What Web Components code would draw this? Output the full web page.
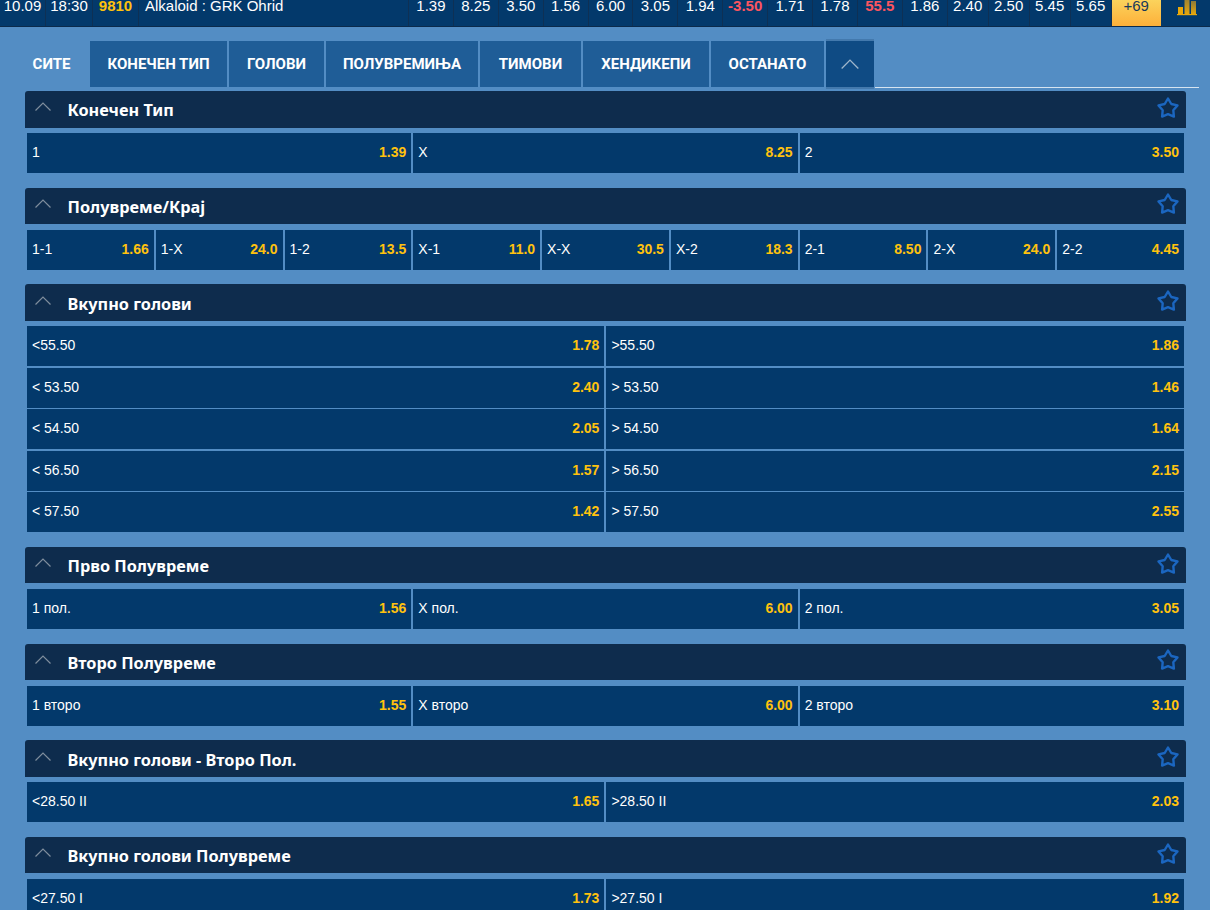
<!DOCTYPE html>
<html>
<head>
<meta charset="utf-8">
<style>
    html,body{margin:0;height:910px;overflow:hidden;background:#538dc4;}
    body{font-family:"Liberation Sans",Arial,sans-serif;color:#fff;}
    #markets{display:block;padding:0 24px 0 25px;}
</style>
</head>
<body>
<top-bar date="10.09" time="18:30" code="9810" match="Alkaloid : GRK Ohrid" more="+69"
    odds="1.39 8.25 3.50 1.56 6.00 3.05 1.94 -3.50 1.71 1.78 55.5 1.86 2.40 2.50 5.45 5.65"></top-bar>
<odds-tabs></odds-tabs>
<div id="markets">
    <market-panel heading="Конечен Тип" cols="3">
        <odd-cell label="1" value="1.39"></odd-cell><odd-cell label="X" value="8.25"></odd-cell><odd-cell label="2" value="3.50"></odd-cell>
    </market-panel>
    <market-panel heading="Полувреме/Крај" cols="9">
        <odd-cell label="1-1" value="1.66"></odd-cell><odd-cell label="1-X" value="24.0"></odd-cell><odd-cell label="1-2" value="13.5"></odd-cell>
        <odd-cell label="X-1" value="11.0"></odd-cell><odd-cell label="X-X" value="30.5"></odd-cell><odd-cell label="X-2" value="18.3"></odd-cell>
        <odd-cell label="2-1" value="8.50"></odd-cell><odd-cell label="2-X" value="24.0"></odd-cell><odd-cell label="2-2" value="4.45"></odd-cell>
    </market-panel>
    <market-panel heading="Вкупно голови" cols="2">
        <odd-cell label="<55.50" value="1.78"></odd-cell><odd-cell label=">55.50" value="1.86"></odd-cell>
        <odd-cell label="< 53.50" value="2.40"></odd-cell><odd-cell label="> 53.50" value="1.46"></odd-cell>
        <odd-cell label="< 54.50" value="2.05"></odd-cell><odd-cell label="> 54.50" value="1.64"></odd-cell>
        <odd-cell label="< 56.50" value="1.57"></odd-cell><odd-cell label="> 56.50" value="2.15"></odd-cell>
        <odd-cell label="< 57.50" value="1.42"></odd-cell><odd-cell label="> 57.50" value="2.55"></odd-cell>
    </market-panel>
    <market-panel heading="Прво Полувреме" cols="3">
        <odd-cell label="1 пол." value="1.56"></odd-cell><odd-cell label="X пол." value="6.00"></odd-cell><odd-cell label="2 пол." value="3.05"></odd-cell>
    </market-panel>
    <market-panel heading="Второ Полувреме" cols="3">
        <odd-cell label="1 второ" value="1.55"></odd-cell><odd-cell label="X второ" value="6.00"></odd-cell><odd-cell label="2 второ" value="3.10"></odd-cell>
    </market-panel>
    <market-panel heading="Вкупно голови - Второ Пол." cols="2">
        <odd-cell label="<28.50 II" value="1.65"></odd-cell><odd-cell label=">28.50 II" value="2.03"></odd-cell>
    </market-panel>
    <market-panel heading="Вкупно голови Полувреме" cols="2">
        <odd-cell label="<27.50 I" value="1.73"></odd-cell><odd-cell label=">27.50 I" value="1.92"></odd-cell>
    </market-panel>
</div>
<script>
const CHEVRON = `<svg width="16" height="9" viewBox="0 0 16 9" fill="none" stroke="currentColor" stroke-width="1.2"><path d="M0.5 8.5L8 1L15.5 8.5"/></svg>`;

class TopBar extends HTMLElement{
    constructor(){
        super()
        this.attachShadow({mode:"open"});
        this.shadowRoot.append(TopBar.template.content.cloneNode(true))
    }
    connectedCallback(){
        const $ = (s)=>this.shadowRoot.querySelector(s);
        $("#date").textContent = this.getAttribute("date");
        $("#time").textContent = this.getAttribute("time");
        $("#code").textContent = this.getAttribute("code");
        $("#match").textContent = this.getAttribute("match");
        $("#more").textContent = this.getAttribute("more");
        const odds = $("#odds");
        this.getAttribute("odds").split(" ").forEach((odd,i)=>{
            let cell = document.createElement("div");
            cell.className = "odd" + (i > 11 ? " narrow" : "") + (i === 7 || i === 10 ? " line" : "");
            cell.textContent = odd;
            odds.append(cell);
        });
    }
}
TopBar.template = document.createElement("template")
TopBar.template.innerHTML = `
    <style>
        :host{
            display:flex;
            height:26px;
            background:#03396b;
            border-bottom:1px solid #0b2a4b;
            font-size:15px;
            line-height:12px;
            color:#fff;
            overflow:hidden;
        }
        .info{box-sizing:border-box;height:26px;border-right:1px solid #0e3054;white-space:nowrap;text-align:center;}
        #date{width:46px;}
        #time{width:47px;}
        #code{width:46px;color:#ffc20e;font-weight:bold;}
        #match{width:270px;text-align:left;padding-left:6px;}
        #odds{display:flex;}
        .odd{box-sizing:border-box;width:44.9px;height:26px;border-right:1px solid #0e3054;text-align:center;}
        .narrow{width:41px;}
        .line{color:#fb5560;font-weight:bold;}
        #more{
            width:49px;height:26px;text-align:center;color:#17395a;
            background:linear-gradient(#fbd35c,#fdb03a);
        }
        #chart{margin-left:16px;}
    </style>
    <div class="info" id="date"></div>
    <div class="info" id="time"></div>
    <div class="info" id="code"></div>
    <div class="info" id="match"></div>
    <div id="odds"></div>
    <div id="more"></div>
    <svg id="chart" width="20" height="16" viewBox="0 0 20 16">
        <defs><linearGradient id="bar" x1="0" y1="0" x2="0" y2="1"><stop offset="0" stop-color="#8c7a3a"/><stop offset="1" stop-color="#eaa80a"/></linearGradient></defs>
        <rect x="1" y="7" width="5" height="8" fill="#eaa80a"/>
        <rect x="7.5" y="-4" width="5" height="19" fill="url(#bar)"/>
        <rect x="14" y="1" width="5" height="14" fill="url(#bar)"/>
        <rect x="0" y="14" width="20" height="1.2" fill="#eaa80a"/>
    </svg>
`
customElements.define("top-bar", TopBar);

class OddsTabs extends HTMLElement{
    constructor(){
        super()
        this.attachShadow({mode:"open"});
        this.shadowRoot.append(OddsTabs.template.content.cloneNode(true))
        this.shadowRoot.querySelector("#collapse").innerHTML = CHEVRON.replace('width="16" height="9"','width="18" height="10"');
    }
}
OddsTabs.template = document.createElement("template")
OddsTabs.template.innerHTML = `
    <style>
        :host{
            display:flex;
            height:47px;
            margin-top:11px;
            padding:3px 11px 0 13px;
            box-sizing:content-box;
            align-items:stretch;
            font-family:Roboto,"Noto Sans",sans-serif;
            font-size:15px;
            font-weight:700;
            color:#fff;
        }
        .tab{
            display:flex;align-items:center;justify-content:center;
            box-sizing:border-box;
            background:#1f5d97;
            margin-right:2px;
            white-space:nowrap;
            height:46px;
        }
        .active{background:none;margin-right:0;}
        #collapse{
            width:48px;height:50px;margin-top:-2px;margin-right:0;
            background:#0f4b84;
            border:solid #4379ad;border-width:2px 0 2px 0;
            color:#9fb6cb;
        }
        #line{flex:1;height:1px;background:#d6e4f0;margin-top:46px;margin-left:1px;}
    </style>
    <div class="tab active" style="width:77px">СИТЕ</div>
    <div class="tab" style="width:137px">КОНЕЧЕН ТИП</div>
    <div class="tab" style="width:95px">ГОЛОВИ</div>
    <div class="tab" style="width:152px">ПОЛУВРЕМИЊА</div>
    <div class="tab" style="width:101px">ТИМОВИ</div>
    <div class="tab" style="width:126px">ХЕНДИКЕПИ</div>
    <div class="tab" style="width:113px">ОСТАНАТО</div>
    <div class="tab" id="collapse"></div>
    <div id="line"></div>
`
customElements.define("odds-tabs", OddsTabs);

class MarketPanel extends HTMLElement{
    constructor(){
        super()
        this.attachShadow({mode:"open"});
        this.shadowRoot.append(MarketPanel.template.content.cloneNode(true))
        this.shadowRoot.querySelector("#arrow").innerHTML = CHEVRON;
    }
    connectedCallback(){
        this.shadowRoot.querySelector("#title").textContent = this.getAttribute("heading");
        this.style.setProperty("--cols", this.getAttribute("cols"));
    }
}
MarketPanel.template = document.createElement("template")
MarketPanel.template.innerHTML = `
    <style>
        :host{display:block;margin-top:3px;margin-bottom:14.67px;}
        header{
            display:flex;align-items:center;
            height:36.5px;
            padding:0 6px 0 10px;
            background:#0e2c4d;
            border-radius:3px 3px 0 0;
        }
        #arrow{width:32.5px;color:#7f8e9d;display:flex;margin-top:-5px;}
        #title{
            flex:1;
            margin-top:2px;
            font-family:"Noto Sans","Liberation Sans",sans-serif;
            font-size:16.3px;font-weight:700;color:#fff;
        }
        #rows{
            display:grid;
            grid-template-columns:repeat(var(--cols),1fr);
            column-gap:2px;row-gap:1.5px;
            margin:5.5px 2px 0 2px;
        }
        :host([cols="2"]) #rows{grid-template-columns:577.4px 1fr;}
        svg.star{margin-top:-3px;}
    </style>
    <header>
        <span id="arrow"></span>
        <span id="title"></span>
        <svg class="star" width="24" height="24" viewBox="0 0 24 24" fill="none" stroke="#1b66c0" stroke-width="2.4" stroke-linejoin="round">
            <path d="M12 2.5L15.3 8L21.5 9.4L17.3 14.2L17.9 20.6L12 18.1L6.1 20.6L6.7 14.2L2.5 9.4L8.7 8Z"/>
        </svg>
    </header>
    <div id="rows"><slot></slot></div>
`
customElements.define("market-panel", MarketPanel);

class OddCell extends HTMLElement{
    constructor(){
        super()
        this.attachShadow({mode:"open"});
        this.shadowRoot.append(OddCell.template.content.cloneNode(true))
    }
    connectedCallback(){
        this.shadowRoot.querySelector("#label").textContent = this.getAttribute("label");
        this.shadowRoot.querySelector("#value").textContent = this.getAttribute("value");
    }
}
OddCell.template = document.createElement("template")
OddCell.template.innerHTML = `
    <style>
        :host{
            display:flex;justify-content:space-between;align-items:center;
            box-sizing:border-box;
            height:40px;
            padding:0 5px 2px;
            background:#03396b;
            font-size:14px;
            color:#fff;
            white-space:nowrap;
            min-width:0;
        }
        #value{color:#ffc20e;font-weight:bold;}
    </style>
    <span id="label"></span>
    <span id="value"></span>
`
customElements.define("odd-cell", OddCell);
</script>
</body>
</html>
